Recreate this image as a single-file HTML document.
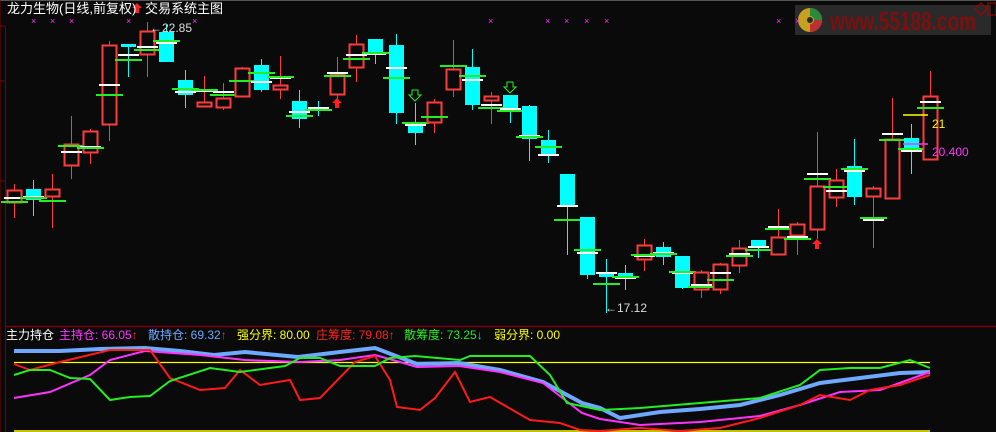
<!DOCTYPE html>
<html><head><meta charset="utf-8"><style>
html,body{margin:0;padding:0;background:#0a0a0a;}
body{width:996px;height:432px;overflow:hidden;position:relative;font-family:"Liberation Sans","Noto Sans CJK SC",sans-serif;}
.t{position:absolute;font-size:12px;white-space:nowrap;line-height:14px;}
</style></head><body>
<svg id="s" width="996" height="432" style="position:absolute;left:0;top:0">
<line x1="0" y1="0.5" x2="996" y2="0.5" stroke="#555"/>
<line x1="5.5" y1="26" x2="5.5" y2="432" stroke="#7a0000"/>
<line x1="0" y1="26" x2="5" y2="26" stroke="#7a0000"/>
<line x1="0" y1="81" x2="5" y2="81" stroke="#7a0000"/>
<line x1="0" y1="181" x2="5" y2="181" stroke="#7a0000"/>
<line x1="5" y1="326.5" x2="996" y2="326.5" stroke="#7a0000" stroke-width="1.5"/>
<line x1="0" y1="0" x2="0" y2="432" stroke="#7a0000"/>
<rect x="795" y="5" width="196" height="30" fill="#2a2a2a"/>
<circle cx="810" cy="20" r="12" fill="#c8a020"/>
<path d="M810 8 A12 12 0 0 1 822 20 L814 20 A4 4 0 0 0 810 16Z" fill="#2a8a3a"/>
<path d="M822 20 A12 12 0 0 1 810 32 L810 24 A4 4 0 0 0 814 20Z" fill="#c03030"/>
<circle cx="810" cy="20" r="3" fill="#2a2a2a"/>
<text x="830" y="30" font-family="Liberation Sans" font-weight="bold" font-size="26" fill="#7a1010" textLength="146" lengthAdjust="spacingAndGlyphs">www.55188.com</text>
<path d="M981 3 l6 6 l-6 6 l-6 -6z" fill="none" stroke="#a00" />
<rect x="988" y="3" width="8" height="12" fill="none" stroke="#a00"/>
<line x1="14" y1="362.5" x2="930" y2="362.5" stroke="#ffff00" stroke-width="1.2"/>
<line x1="14" y1="431" x2="930" y2="431" stroke="#ffff00" stroke-width="1.5"/>
<g id="c" shape-rendering="crispEdges"></g>
<polyline fill="none" stroke="#6ea8ff" stroke-width="4" points="14,351 60,351 100,349 145,348 180,351 214,355 245,352 298,357 340,352 375,348 417,364 459,363 500,370 543,382 582,403 600,408 620,418 660,412 700,409 740,405 780,395 820,383 860,378 900,373 930,372"/>
<polyline fill="none" stroke="#ff33ff" stroke-width="2" points="14,398 50,392 90,375 110,360 145,351 200,355 245,360 300,362 340,360 375,355 400,362 417,367 459,366 500,372 543,383 582,413 600,419 640,425 700,422 760,416 800,405 840,392 880,390 930,372"/>
<polyline fill="none" stroke="#ff1a1a" stroke-width="2" points="14,364 30,370 60,362 110,350 150,350 170,378 200,390 225,388 240,370 260,385 290,380 300,400 320,398 355,362 375,356 390,380 397,407 420,410 435,398 455,372 470,402 490,397 530,420 560,423 580,430 600,431 640,428 680,431 720,428 760,418 800,405 820,395 850,400 870,390 900,385 930,375"/>
<polyline fill="none" stroke="#22ee22" stroke-width="2" points="14,375 30,370 50,370 70,378 90,379 110,400 130,397 150,396 170,381 210,368 240,372 285,366 300,358 320,358 340,366 375,366 390,358 415,356 460,360 470,356 530,356 550,375 567,403 600,410 640,408 700,403 760,398 800,385 820,370 850,368 880,368 910,360 930,368"/>
<path d="M137 3 l5 5 h-3 v5 h-4 v-5 h-3z" fill="#ff2020"/>
<path d="M337 98 l5 5 h-3 v5 h-4 v-5 h-3z" fill="#ff2020"/>
<path d="M817 239 l5 5 h-3 v5 h-4 v-5 h-3z" fill="#ff2020"/>
<path d="M412 90 h6 v5 h3 l-6 6 l-6 -6 h3z" fill="none" stroke="#22ee22"/>
<path d="M507 82 h6 v5 h3 l-6 6 l-6 -6 h3z" fill="none" stroke="#22ee22"/>
<line x1="903" y1="115" x2="928" y2="115" stroke="#ffff00" stroke-width="1.5"/>
<line x1="903" y1="144" x2="928" y2="144" stroke="#ff33ff" stroke-width="1.5"/>
</svg>
<div class="t" style="left:7px;top:2px;color:#fff;font-size:13px">龙力生物(日线,前复权)</div>
<div class="t" style="left:145px;top:2px;color:#fff;font-size:13px">交易系统主图</div>
<div class="t" style="left:150px;top:21px;color:#ddd">←22.85</div>
<div class="t" style="left:605px;top:301px;color:#ddd">←17.12</div>
<div class="t" style="left:932px;top:117px;color:#ffff00">21</div>
<div class="t" style="left:932px;top:145px;color:#ff33ff">20.400</div>
<div class="t" style="left:6px;top:328px;color:#fff">主力持仓</div>
<div class="t" style="left:59px;top:328px;color:#ff33ff">主持仓: 66.05<span style="color:#ff3333">↑</span></div>
<div class="t" style="left:148px;top:328px;color:#6ea8ff">散持仓: 69.32<span style="color:#ff3333">↑</span></div>
<div class="t" style="left:237px;top:328px;color:#ffff00">强分界: 80.00</div>
<div class="t" style="left:316px;top:328px;color:#ff2020">庄筹度: 79.08<span style="color:#ff3333">↑</span></div>
<div class="t" style="left:404px;top:328px;color:#22ee22">散筹度: 73.25<span style="color:#00e0ff">↓</span></div>
<div class="t" style="left:494px;top:328px;color:#ffff00">弱分界: 0.00</div>
<script>
var D=[[14,184,190,202,218,'r',198,202],[33,180,189,200,216,'c',197,198],[52,174,189,196,228,'r',0,201],
[71,116,144,165,179,'r',152,146],[90,129,131,152,164,'r',147,148],[109,41,45,124,141,'r',85,95],
[128,44,44,47,77,'c',55,60],[147,22,31,54,77,'r',47,50],[166,25,32,62,62,'c',43,41],
[185,70,80,95,108,'c',92,89],[204,76,102,106,107,'r',91,90],[223,83,98,107,110,'r',92,95],
[242,67,68,96,96,'r',0,81],[261,59,65,90,92,'c',82,73],[280,56,85,89,99,'r',78,77],
[299,90,101,119,128,'c',112,116],[318,101,107,109,116,'c',108,110],[337,57,74,94,99,'r',73,76],
[356,35,44,67,82,'r',55,59],[375,39,39,53,64,'c',54,53],[396,34,45,113,124,'c',68,78],
[415,103,123,133,145,'c',125,123],[434,99,102,122,133,'r',117,117],[453,40,69,89,97,'r',0,66],
[472,49,67,105,110,'c',80,76],[491,92,96,100,124,'r',105,108],[510,95,95,109,123,'c',109,111],
[529,105,106,139,161,'c',136,137],[548,130,140,154,163,'c',155,147],[567,174,174,206,255,'c',206,220],
[587,217,217,275,279,'c',253,250],[606,259,273,277,313,'c',273,284],[625,265,273,276,290,'c',278,277],
[644,239,245,259,271,'r',256,255],[663,242,247,257,265,'c',253,254],[682,256,256,288,289,'c',273,272],
[701,270,272,289,298,'r',285,287],[720,263,264,289,294,'r',273,280],[739,240,248,265,273,'r',254,256],
[758,240,240,247,258,'c',247,250],[778,209,237,254,254,'r',227,229],[797,222,224,235,255,'r',237,239],
[817,132,186,229,239,'r',174,179],[836,169,180,197,207,'r',191,187],[854,139,166,197,205,'c',171,169],
[873,186,188,196,248,'r',220,218],[892,98,139,198,198,'r',134,140],[911,124,138,149,174,'c',151,149],
[930,71,96,159,159,'r',102,108]];
var h='';
D.forEach(function(d){var x=d[0],col=d[5]=='r'?'#ff3c3c':'#00ffff';
h+='<line x1="'+(x+0.5)+'" y1="'+d[1]+'" x2="'+(x+0.5)+'" y2="'+d[4]+'" stroke="'+col+'" stroke-width="1"/>';
if(d[5]=='r')h+='<rect x="'+(x-6.5)+'" y="'+(d[2]+0.5)+'" width="14" height="'+Math.max(1,d[3]-d[2])+'" fill="#0a0a0a" stroke="#ff3c3c" stroke-width="1.6"/>';
else h+='<rect x="'+(x-7)+'" y="'+d[2]+'" width="15" height="'+Math.max(2,d[3]-d[2])+'" fill="#00ffff"/>';
if(d[6])h+='<line x1="'+(x-10)+'" y1="'+d[6]+'" x2="'+(x+11)+'" y2="'+d[6]+'" stroke="#fff" stroke-width="1.6"/>';
h+='<line x1="'+(x-13)+'" y1="'+d[7]+'" x2="'+(x+14)+'" y2="'+d[7]+'" stroke="#22ee22" stroke-width="1.6"/>';});
[34,53,72,129,195,491,548,567,587,607,779,798].forEach(function(x){h+='<text x="'+(x-3)+'" y="24" fill="#ff33ff" font-size="9" font-family="Liberation Sans">×</text>';});
document.getElementById('c').innerHTML=h;
</script>
</body></html>
